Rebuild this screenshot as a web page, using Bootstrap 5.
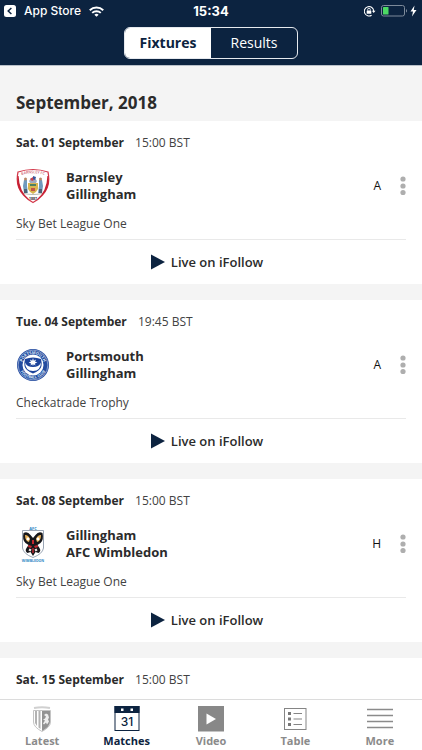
<!DOCTYPE html>
<html lang="en">
<head>
<meta charset="utf-8">
<meta name="viewport" content="width=device-width, initial-scale=1">
<title>Fixtures</title>
<link href="https://cdn.jsdelivr.net/npm/bootstrap@5.3.0/dist/css/bootstrap.min.css" rel="stylesheet">
<style>
:root { --navy: #0c2340; --ink: #2b2b2b; --soft: #424242; --grey: #8b8b8b; }
body { font-family: "Open Sans", sans-serif; font-size: 12px; line-height: 20px; color: var(--ink); background: #f4f4f4; }
.app-header { background: var(--navy); border-bottom: 1px solid #b9c0c9; }
.status { height: 22px; font-family: Inter, sans-serif; font-size: 13px; line-height: 22px; }
.status > * { flex: 1 1 0; }
.status a { font-size: 12px; font-weight: 500; }
.switcher { width: 174px; height: 32px; border: 1px solid #e6e9ee; border-radius: 6px; overflow: hidden; margin: 5px auto 6px; }
.switcher .btn { flex: 1 1 0; border: 0; border-radius: 0; padding: 0; color: #fff; font-size: 14px; line-height: 30px; }
.switcher .btn.active { background: #fff; color: var(--navy); font-weight: 700; }
.scroller { min-height: 0; scrollbar-width: none; }
.scroller::-webkit-scrollbar { display: none; }
.month { font-size: 17px; line-height: 23px; font-weight: 700; padding: 25px 16px 7px; }
.fixture { background: #fff; padding: 12px 16px 0; margin-bottom: 16px; }
.fixture h2 { font-size: 12px; line-height: 20px; font-weight: 700; }
.fixture h2 span { color: var(--soft); }
.teams { font-size: 13px; line-height: 17px; font-weight: 700; }
.fixture-row { margin-top: 16px; height: 34px; }
.crest { width: 34px; height: 36px; flex: none; margin-right: 16px; }
.venue { font-size: 12px; margin-right: 19px; color: #111; }
.dots { width: 6px; height: 20px; line-height: 0; }
.comp { padding: 11px 0 5px; border-bottom: 1px solid #e9e9e9; color: var(--soft); }
.live { height: 44px; font-size: 13px; font-weight: 600; line-height: 20px; color: var(--ink); gap: 6px; }
.tabs { background: #fff; border-top: 1px solid #dcdcdc; }
.tabs a { flex: 1 1 0; color: var(--grey); font-size: 11px; line-height: 16px; font-weight: 700; padding: 5px 0 1px; }
.tabs a.active { color: var(--navy); }
.tabs svg { display: block; width: 28px; height: 28px; }
.cal { font: 500 12px Inter, sans-serif; }
</style>
<script src="https://cdn.jsdelivr.net/npm/bootstrap@5.3.0/dist/js/bootstrap.bundle.min.js"></script>
</head>
<body class="d-flex flex-column vh-100 overflow-hidden">

<svg class="d-none" aria-hidden="true">
  <symbol id="dots" viewBox="0 0 6 20"><g fill="#aeaeae"><circle cx="3" cy="3" r="2.6"/><circle cx="3" cy="10" r="2.6"/><circle cx="3" cy="16.5" r="2.6"/></g></symbol>
  <symbol id="play" viewBox="0 0 14 16"><path d="M0 .5v15L14 8z" fill="#0c2340"/></symbol>
</svg>

<header class="app-header">
  <div class="status d-flex text-white">
    <div class="d-flex align-items-center ps-1">
      <a href="#" class="d-flex align-items-center text-white text-decoration-none">
        <svg width="12" height="12" class="me-1" viewBox="0 0 12 12" aria-hidden="true"><rect width="12" height="12" rx="2.5" fill="#fff"/><path d="M7.4 3 4.2 6l3.2 3" fill="none" stroke="#0c2340" stroke-width="1.5"/></svg>
        <span class="ms-1">App Store</span></a>
      <svg class="ms-2" width="15" height="11" viewBox="0 0 14 10" fill="none" stroke="#fff" stroke-width="1.8" aria-label="Wi-Fi"><path d="M.7 3.8a9.2 9.2 0 0 1 12.6 0M3 6.3a5.8 5.8 0 0 1 8 0"/><path d="M7 10 5 8a3 3 0 0 1 4 0z" fill="#fff" stroke="none"/></svg>
    </div>
    <div class="text-center fw-bold">15:34</div>
    <div class="d-flex align-items-center justify-content-end pe-1">
      <svg width="54" height="14" viewBox="0 0 54 14" aria-label="Rotation locked, charging">
        <path d="M7.6 11.200A4.700 4.700 0 1 1 9.700 7" fill="none" stroke="#fff" stroke-width="1.1"/><path d="M7.900 6.800h3.600l-1.800 2.300z" fill="#fff"/>
        <rect x="2.700" y="6.500" width="4.600" height="3.300" rx=".5" fill="#fff"/><path d="M3.700 6.500V5.500a1.300 1.300 0 0 1 2.600 0v1" fill="none" stroke="#fff" stroke-width=".9"/>
        <rect x="17.500" y="1.500" width="23" height="10.500" rx="2" fill="none" stroke="#7d8a9a"/><rect x="19" y="3" width="5.500" height="7.500" rx=".6" fill="#4cd964"/><path d="M42 5c1.400.4 1.400 3.200 0 3.600z" fill="#7d8a9a"/>
        <path d="M50.500 1.500 46.500 7.500h2.500L48 12.500 52.500 6h-2.700z" fill="#fff"/>
      </svg>
    </div>
  </div>
  <div class="switcher d-flex" role="group" aria-label="Match list">
    <button type="button" class="btn active" aria-pressed="true">Fixtures</button>
    <button type="button" class="btn" aria-pressed="false">Results</button>
  </div>
</header>

<main class="scroller flex-grow-1 overflow-auto">
  <h1 class="month m-0">September, 2018</h1>

  <article class="fixture">
    <h2 class="m-0">Sat. 01 September <span class="fw-normal ms-2">15:00 BST</span></h2>
    <div class="fixture-row d-flex align-items-center">
      <svg class="crest" viewBox="0 0 34 36" aria-label="Barnsley crest">
        <path d="M2 4Q17-1 32 4Q35 18 26.500 27Q22.500 31.500 17 34.500Q11.500 31.500 7.500 27Q-1 18 2 4z" fill="#fff" stroke="#d3384a" stroke-width="1.200"/>
        <path d="M1.500 8Q0 20 7.500 27Q10 30 13.500 32Q3 23 2.600 8zM32.500 8Q34 20 26.500 27Q24 30 20.500 32Q31 23 31.400 8z" fill="#c61f32"/>
        <path id="arc1" d="M4 7.500Q17 3 30 7.500" fill="none"/>
        <text font-size="3.600" font-weight="600" fill="#cc6070"><textPath href="#arc1" startOffset="50%" text-anchor="middle">BARNSLEY FC</textPath></text>
        <path d="M13 13l2-3h4l2 3-1 2h-6z" fill="#9faac0"/><path d="M14 11l3-2 1 3-2 1z" fill="#c9414c"/><path d="M17 8l3 1-1 3-2-1z" fill="#39549a"/>
        <path d="M12 15h10v6q-2 4-5 5q-3-1-5-5z" fill="#d9b650"/><path d="M14 16h6v2h-6z" fill="#4d8060"/><path d="M15 20h4v3h-4z" fill="#c05448"/>
        <path d="M8 12h3v6l1 7H8l-1-7zM23 12h3l1 6-1 7h-4l1-7z" fill="#6f9abd"/><circle cx="9.500" cy="11" r="1.500" fill="#b98868"/><circle cx="24.500" cy="11" r="1.500" fill="#b98868"/><path d="M8 21h3v4H8zM23 21h3v4h-3z" fill="#4f6274"/>
        <path d="M8 25q9 2 18 0v1q-9 2-18 0z" fill="#b6bab4"/>
        <text x="17" y="31.500" font-size="3.500" font-weight="700" fill="#333" text-anchor="middle">1887</text>
      </svg>
      <div class="teams flex-grow-1"><div>Barnsley</div><div>Gillingham</div></div>
      <span class="venue">A</span>
      <button type="button" class="btn p-0 border-0 dots" aria-label="More options"><svg width="6" height="20"><use href="#dots"/></svg></button>
    </div>
    <div class="comp">Sky Bet League One</div>
    <a href="#" class="live d-flex align-items-center justify-content-center text-decoration-none pe-2"><svg width="14" height="16"><use href="#play"/></svg><span>Live on iFollow</span></a>
  </article>

  <article class="fixture">
    <h2 class="m-0">Tue. 04 September <span class="fw-normal ms-2">19:45 BST</span></h2>
    <div class="fixture-row d-flex align-items-center">
      <svg class="crest" viewBox="0 0 34 36" aria-label="Portsmouth crest">
        <circle cx="17" cy="18" r="16" fill="#234b9f"/><circle cx="17" cy="18" r="14.900" fill="none" stroke="#e8eef8" stroke-width=".5"/>
        <path id="arc2" d="M6 18a11 11 0 0 1 22 0" fill="none"/><path id="arc3" d="M3.300 18a13.700 13.700 0 0 0 27.400 0" fill="none"/>
        <text font-size="4" font-weight="700" fill="#dfe7f6"><textPath href="#arc2" startOffset="50%" text-anchor="middle">PORTSMOUTH</textPath></text>
        <text font-size="3.700" font-weight="700" fill="#dfe7f6"><textPath href="#arc3" startOffset="50%" text-anchor="middle">FOOTBALL CLUB</textPath></text>
        <circle cx="17" cy="18" r="10.500" fill="#fff"/><path d="M9 12q8-3 16 0q2 8-2 11q-3 2.500-6 3.500q-3-1-6-3.500q-4-3-2-11z" fill="#1c439a"/>
        <path d="M9 15.500q2 4.500 8 4.500t8-4.500q-.3 8.500-8 8.500t-8-8.500z" fill="#fff"/>
        <path d="M17 11l.8 2.700 2.300-1.300-1 2.300 2.300.8-2.500.9.600 2-1.800-1.200-.7 1.700-.7-1.700-1.800 1.200.6-2-2.500-.9 2.300-.8-1-2.300 2.300 1.300z" fill="#fff"/>
      </svg>
      <div class="teams flex-grow-1"><div>Portsmouth</div><div>Gillingham</div></div>
      <span class="venue">A</span>
      <button type="button" class="btn p-0 border-0 dots" aria-label="More options"><svg width="6" height="20"><use href="#dots"/></svg></button>
    </div>
    <div class="comp">Checkatrade Trophy</div>
    <a href="#" class="live d-flex align-items-center justify-content-center text-decoration-none pe-2"><svg width="14" height="16"><use href="#play"/></svg><span>Live on iFollow</span></a>
  </article>

  <article class="fixture">
    <h2 class="m-0">Sat. 08 September <span class="fw-normal ms-2">15:00 BST</span></h2>
    <div class="fixture-row d-flex align-items-center">
      <svg class="crest" viewBox="0 0 34 36" aria-label="AFC Wimbledon crest">
        <text x="17" y="3.500" font-size="4" font-weight="700" fill="#2a86c4" text-anchor="middle">AFC</text>
        <path d="M6.500 4.500h21V22q-1 6-10.500 9.500Q7.500 28 6.500 22z" fill="#fff" stroke="#8f9bab" stroke-width=".9"/>
        <path d="M7.500 7q4-2 7 2l2.500 3 2.500-3q3-4 7-2q1.500 7-2 10l-3 2 2 3q2 3-1 5l-3-1-2.500 4-2.500-4-3 1q-3-2-1-5l2-3-3-2q-3.500-3-2-10z" fill="#17171b"/>
        <path d="M9 9q3.500 0 5 4l-1 3q-4-1-4-7zM25 9q-3.500 0-5 4l1 3q4-1 4-7z" fill="#e8b25a"/><circle cx="12" cy="13" r="1.400" fill="#fff"/><circle cx="22" cy="13" r="1.400" fill="#fff"/>
        <path d="M16 14h2v4h-2zM12.500 19l3.500 1-1 2-3-1zM21.500 19l-3.500 1 1 2 3-1zM16.300 22h1.400v5h-1.400z" fill="#c3262f"/><path d="M13.500 22.500l2 1-1 2-2-1zM20.500 22.500l-2 1 1 2 2-1z" fill="#f3e8e4"/>
        <text x="17" y="35.500" font-size="3.500" font-weight="700" fill="#2a86c4" text-anchor="middle">WIMBLEDON</text>
      </svg>
      <div class="teams flex-grow-1"><div>Gillingham</div><div>AFC Wimbledon</div></div>
      <span class="venue">H</span>
      <button type="button" class="btn p-0 border-0 dots" aria-label="More options"><svg width="6" height="20"><use href="#dots"/></svg></button>
    </div>
    <div class="comp">Sky Bet League One</div>
    <a href="#" class="live d-flex align-items-center justify-content-center text-decoration-none pe-2"><svg width="14" height="16"><use href="#play"/></svg><span>Live on iFollow</span></a>
  </article>

  <article class="fixture pb-3">
    <h2 class="m-0">Sat. 15 September <span class="fw-normal ms-2">15:00 BST</span></h2>
  </article>
</main>

<nav class="tabs d-flex" aria-label="Main">
  <a href="#" class="d-flex flex-column align-items-center text-decoration-none">
    <svg viewBox="0 0 28 28" aria-hidden="true"><path d="M6 3q8-1.500 16 0" fill="none" stroke="#d0d0d0" stroke-width="2"/><path d="M5.500 5.500h17V17q0 5-8.500 9.500Q5.500 22 5.500 17z" fill="#fff" stroke="#b5b5b5" stroke-width=".8"/><path d="M7 6h2v15l-2-3zM10.500 6h2v18l-2-1.500z" fill="#b2b2b2"/><path d="M14 6h8v11q0 4.500-8 9z" fill="#939393"/><path d="M16 10l2-1.500 2 1 1 3-1 2 1 2-2 3-1-2-2 2-1-1 2-3-2-1 2-1 1-2z" fill="#efefef"/></svg>
    Latest</a>
  <a href="#" class="active d-flex flex-column align-items-center text-decoration-none" aria-current="page">
    <svg viewBox="0 0 28 28" aria-hidden="true"><rect x="2" y="1.500" width="24" height="24" fill="#fff" stroke="#0c2340"/><path d="M1.500 1h25v7h-25z" fill="#0c2340"/><path d="M8 3.500h2.500V6H8zM17.500 3.500H20V6h-2.500z" fill="#fff"/><text class="cal" x="14" y="21" text-anchor="middle" fill="#0c2340">31</text></svg>
    Matches</a>
  <a href="#" class="d-flex flex-column align-items-center text-decoration-none">
    <svg viewBox="0 0 28 28" aria-hidden="true"><path d="M1 1h26v25.500H1z" fill="#888"/><path d="M9.500 8.500v11l9.500-5.500z" fill="#fff"/></svg>
    Video</a>
  <a href="#" class="d-flex flex-column align-items-center text-decoration-none">
    <svg viewBox="0 0 28 28" aria-hidden="true"><rect x="3.500" y="3.500" width="21.500" height="21" fill="none" stroke="#858585"/><path d="M7 7h3v3H7zM7 12.500h3v3H7zM7 18h3v3H7z" fill="#777"/><path d="M12.500 8.500h8.500M12.500 14h8.500M12.500 19.500h8.500" stroke="#858585"/></svg>
    Table</a>
  <a href="#" class="d-flex flex-column align-items-center text-decoration-none">
    <svg viewBox="0 0 28 28" aria-hidden="true"><path d="M1 4.500h26M1 10.500h26M1 16.500h26M1 22.500h26" stroke="#8b8b8b" stroke-width="1.300"/></svg>
    More</a>
</nav>
</body>
</html>
